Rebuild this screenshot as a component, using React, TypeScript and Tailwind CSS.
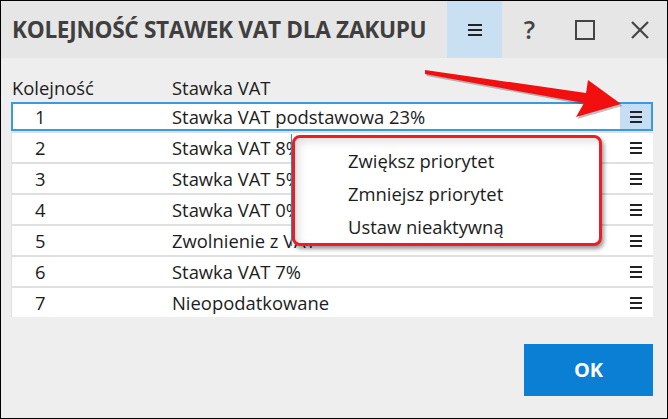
const rows = [
  "Stawka VAT podstawowa 23%",
  "Stawka VAT 8%",
  "Stawka VAT 5%",
  "Stawka VAT 0%",
  "Zwolnienie z VAT",
  "Stawka VAT 7%",
  "Nieopodatkowane",
];

function Burger({ w = 12, gap = 5, thick = 2 }: { w?: number; gap?: number; thick?: number }) {
  const h = gap * 2 + thick;
  return (
    <svg width={w} height={h} viewBox={`0 0 ${w} ${h}`}>
      <rect x="0" y="0" width={w} height={thick} fill="#222" />
      <rect x="0" y={gap} width={w} height={thick} fill="#222" />
      <rect x="0" y={gap * 2} width={w} height={thick} fill="#222" />
    </svg>
  );
}

export default function App() {
  return (
    <div
      className="relative w-[668px] h-[419px] border border-black bg-[#eeeeee] flex flex-col overflow-hidden text-[#1c1c1c]"
      style={{ fontFamily: '"Open Sans", "Noto Sans", sans-serif' }}
    >
      {/* title bar */}
      <div className="h-[57px] bg-[#e6e6e6] flex items-center shrink-0">
        <div className="pl-[11px] flex-grow text-[22.6px] font-bold text-[#3f3f3f] tracking-[-0.3px] whitespace-nowrap">
          KOLEJNOŚĆ STAWEK VAT DLA ZAKUPU
        </div>
        <div className="w-[55px] h-full bg-[#c9e0f2] flex items-center justify-center">
          <Burger w={14} gap={5} thick={2} />
        </div>
        <div className="w-[55px] h-full flex items-center justify-center text-[25px] font-semibold text-[#444]">
          ?
        </div>
        <div className="w-[55px] h-full flex items-center justify-center">
          <div className="w-[20px] h-[20px] border-2 border-[#444]" />
        </div>
        <div className="w-[55px] h-full flex items-center justify-center">
          <svg width="18" height="18" viewBox="0 0 18 18">
            <path d="M1 1 L17 17 M17 1 L1 17" stroke="#444" strokeWidth="2.2" />
          </svg>
        </div>
      </div>

      {/* body */}
      <div className="flex flex-col pl-[10px] pr-[14px] text-[18.4px]">
        <div className="mt-[19px] h-[22px] flex items-center">
          <div className="w-[161px] pl-px">Kolejność</div>
          <div>Stawka VAT</div>
        </div>
        <div className="mt-[3px] flex flex-col gap-[2px] bg-[#e0e0e0]">
          {rows.map((r, i) => (
            <div
              key={i}
              className={
                i === 0
                  ? "h-[29px] bg-white flex items-center border-2 border-[#3a9ae0]"
                  : "h-[29px] bg-white flex items-center ml-px"
              }
            >
              <div className={i === 0 ? "w-[159px] pl-[22px]" : "w-[160px] pl-[23px]"}>{i + 1}</div>
              <div className="flex-grow whitespace-nowrap">{r}</div>
              <div
                className={
                  i === 0
                    ? "w-[31px] h-full bg-[#c5def3] flex items-center justify-center"
                    : "w-[31px] mr-[2px] h-full flex items-center justify-center"
                }
              >
                <Burger />
              </div>
            </div>
          ))}
        </div>
        <div className="mt-[27px] self-end w-[129px] h-[52px] bg-[#0b7fd4] flex items-center justify-center text-white font-bold text-[20px]">
          OK
        </div>
      </div>

      {/* context menu */}
      <div className="absolute left-[290px] top-[133px] w-[312px] h-[112px] border-l border-[#2b8fd8]" />
      <div className="absolute left-[291px] top-[134px] w-[310px] h-[111px] bg-white border-[3px] border-[#ee1c24] rounded-[8px] shadow-[2px_3px_4px_rgba(0,0,0,0.4),inset_4px_4px_8px_rgba(0,0,0,0.12)] flex flex-col pl-[53px] pt-[6px] text-[18.4px]">
        <div className="h-[35px] flex items-center">Zwiększ priorytet</div>
        <div className="h-[35px] flex items-center">Zmniejsz priorytet</div>
        <div className="h-[35px] flex items-center">Ustaw nieaktywną</div>
      </div>

      {/* annotation arrow */}
      <svg className="absolute left-[-1px] top-[-1px] pointer-events-none" width="668" height="419" viewBox="0 0 668 419">
        <polygon
          points="425,70 586,93 588,80 621,104 576,117 584,103 425,74"
          fill="rgba(0,0,0,0.25)"
          transform="translate(1.5,2)"
        />
        <polygon points="425,70 586,93 588,80 621,104 576,117 584,103 425,74" fill="#f20f0f" />
      </svg>
    </div>
  );
}
